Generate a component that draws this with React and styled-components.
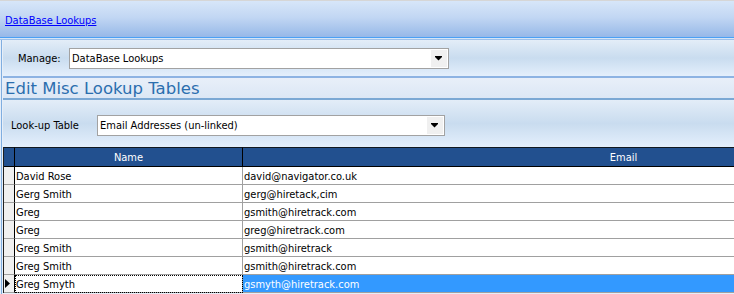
import React from "react";
import styled, { createGlobalStyle } from "styled-components";

const GlobalStyle = createGlobalStyle`
  html, body { margin: 0; padding: 0; }
  body {
    width: 734px;
    height: 294px;
    overflow: hidden;
    background: #e4eefa;
    font-family: "DejaVu Sans Condensed", "DejaVu Sans", Tahoma, sans-serif;
    font-size: 11px;
    color: #000;
  }
`;

const Page = styled.div`
  display: flex;
  flex-direction: column;
  width: 734px;
  height: 294px;
  overflow: hidden;
`;

const TopEdge = styled.div`
  height: 1px;
  background: #d6d6d6;
`;

const Header = styled.div`
  height: 36px;
  display: flex;
  align-items: center;
  padding-left: 5px;
  background: linear-gradient(#d7e6f9, #c2d7f3 45%, #96b8e8);
`;

const Crumb = styled.a`
  color: #0000ff;
  text-decoration: underline;
  cursor: pointer;
  margin-top: 2px;
`;

const Rule = styled.div`
  height: ${(p) => p.$h || 1}px;
  background: ${(p) => p.$c};
`;

const Panel = styled.div`
  display: flex;
  flex-direction: column;
  flex: 1;
  margin-left: 1px;
  border-left: 1px solid #80aee0;
  padding-left: 1px;
  background: #e6eef8;
`;

const FormRow = styled.div`
  height: ${(p) => p.$h}px;
  display: flex;
  align-items: center;
  padding-left: ${(p) => p.$pad}px;
  padding-top: ${(p) => p.$top || 0}px;
  box-sizing: border-box;
  background: linear-gradient(#e3edf8, #c9dcef 50%, #e4effc);
`;

const Label = styled.span`
  width: ${(p) => p.$w}px;
  flex-shrink: 0;
  color: #000;
`;

const Select = styled.div`
  width: ${(p) => p.$w}px;
  height: 21px;
  box-sizing: border-box;
  border: 1px solid #a2a2a2;
  background: #fff;
  display: flex;
  align-items: center;
  padding: 0 1px 0 2px;
`;

const SelectText = styled.span`
  flex: 1;
  white-space: nowrap;
  overflow: hidden;
`;

const DropButton = styled.span`
  width: 16px;
  height: 17px;
  background: #f0f0f0;
  display: flex;
  align-items: center;
  justify-content: center;
`;

const TitleRow = styled.div`
  height: 20px;
  display: flex;
  align-items: center;
  padding-left: 2px;
  background: linear-gradient(#e8eff9, #dce7f5);
`;

const Title = styled.h1`
  margin: 0;
  font-family: "DejaVu Sans", Tahoma, sans-serif;
  font-weight: normal;
  font-size: 16.5px;
  color: #2b6eae;
`;

const Grid = styled.div`
  display: flex;
  flex-direction: column;
  background: #fff;
  border-left: 1px solid #202020;
  width: 1020px;
`;

const Row = styled.div`
  display: flex;
  height: ${(p) => (p.$head ? 20 : 18)}px;
`;

const HeadCell = styled.div`
  width: ${(p) => p.$w}px;
  flex-shrink: 0;
  box-sizing: border-box;
  background: #22508f;
  color: #fff;
  border-top: 1px solid #101820;
  border-bottom: 1px solid #000;
  border-right: 1px solid #000;
  display: flex;
  align-items: center;
  justify-content: center;
`;

const RowHeader = styled.div`
  width: 11px;
  flex-shrink: 0;
  box-sizing: border-box;
  background: #f0f0f0;
  border-right: 1px solid #000;
  border-bottom: 1px solid #a0a0a0;
  display: flex;
  align-items: center;
  padding-left: 1px;
`;

const Cell = styled.div`
  width: ${(p) => p.$w}px;
  flex-shrink: 0;
  box-sizing: border-box;
  border-right: 1px solid #a0a0a0;
  border-bottom: 1px solid #a0a0a0;
  background: ${(p) => (p.$sel ? "#3399ff" : "#fff")};
  color: ${(p) => (p.$sel ? "#fff" : "#000")};
  outline: ${(p) => (p.$focus ? "1px dotted #000" : "none")};
  outline-offset: -1px;
  display: flex;
  align-items: center;
  padding: 1px 0 0 1px;
  white-space: nowrap;
  overflow: hidden;
`;

const Arrow = () => (
  <svg width="8" height="5" viewBox="0 0 8 5">
    <rect x="0" y="0" width="7" height="1" fill="#000" />
    <path d="M0 1 H7 L3.5 4.6 Z" fill="#000" />
  </svg>
);

const Pointer = () => (
  <svg width="5" height="9" viewBox="0 0 5 9">
    <path d="M0 0 L5 4.5 L0 9 Z" fill="#000" />
  </svg>
);

const rows = [
  ["David Rose", "david@navigator.co.uk"],
  ["Gerg Smith", "gerg@hiretack,cim"],
  ["Greg", "gsmith@hiretrack.com"],
  ["Greg", "greg@hiretrack.com"],
  ["Greg Smith", "gsmith@hiretrack"],
  ["Greg Smith", "gsmith@hiretrack.com"],
  ["Greg Smyth", "gsmyth@hiretrack.com"],
];

export default function App() {
  return (
    <>
      <GlobalStyle />
      <Page>
        <TopEdge />
        <Header>
          <Crumb>DataBase Lookups</Crumb>
        </Header>
        <Rule $c="#4aa0f4" />
        <Rule $c="#d4e5f8" />
        <Rule $c="#9dc0ea" />
        <Panel>
          <FormRow $h={36} $pad={15}>
            <Label $w={51}>Manage:</Label>
            <Select $w={380}>
              <SelectText>DataBase Lookups</SelectText>
              <DropButton>
                <Arrow />
              </DropButton>
            </Select>
          </FormRow>
          <Rule $h={2} $c="#8db3e3" />
          <TitleRow>
            <Title>Edit Misc Lookup Tables</Title>
          </TitleRow>
          <Rule $h={2} $c="#7ba8d4" />
          <FormRow $h={47} $pad={8} $top={4}>
            <Label $w={86}>Look-up Table</Label>
            <Select $w={348}>
              <SelectText>Email Addresses (un-linked)</SelectText>
              <DropButton>
                <Arrow />
              </DropButton>
            </Select>
          </FormRow>
          <Grid>
            <Row $head>
              <HeadCell $w={11} />
              <HeadCell $w={228}>Name</HeadCell>
              <HeadCell $w={762}>Email</HeadCell>
            </Row>
            {rows.map(([name, email], i) => {
              const last = i === rows.length - 1;
              return (
                <Row key={i}>
                  <RowHeader>{last && <Pointer />}</RowHeader>
                  <Cell $w={228} $focus={last}>
                    {name}
                  </Cell>
                  <Cell $w={762} $sel={last}>
                    {email}
                  </Cell>
                </Row>
              );
            })}
          </Grid>
        </Panel>
      </Page>
    </>
  );
}
